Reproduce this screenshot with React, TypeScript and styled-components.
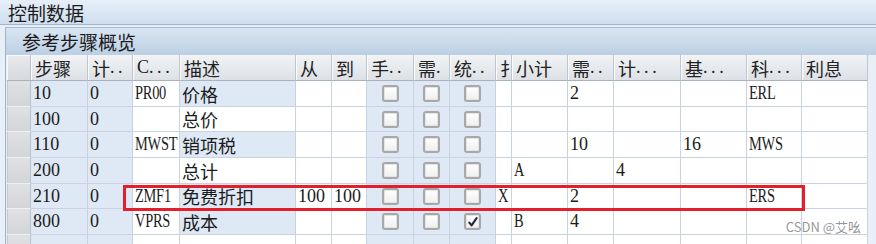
import React from "react";
import styled, { createGlobalStyle } from "styled-components";

const GlobalStyle = createGlobalStyle`
  html, body {
    margin: 0;
    padding: 0;
    overflow: hidden;
    background: #e8eff7;
  }
  body {
    font-family: "Liberation Serif", "Noto Sans CJK SC", serif;
    color: #1b1b1b;
  }
`;

type Bg = "blue" | "white";

type Column = {
  name: string;
  dots: number;
  width: number;
  bg: Bg | "desc";
  check?: boolean;
};

const columns: Column[] = [
  { name: "步骤", dots: 0, width: 57, bg: "blue" },
  { name: "计", dots: 2, width: 45, bg: "blue" },
  { name: "C", dots: 3, width: 47, bg: "white" },
  { name: "描述", dots: 0, width: 116, bg: "desc" },
  { name: "从", dots: 0, width: 36, bg: "white" },
  { name: "到", dots: 0, width: 35, bg: "white" },
  { name: "手", dots: 2, width: 47, bg: "blue", check: true },
  { name: "需", dots: 1, width: 36, bg: "blue", check: true },
  { name: "统", dots: 2, width: 46, bg: "blue", check: true },
  { name: "扌", dots: 0, width: 16, bg: "white" },
  { name: "小计", dots: 0, width: 56, bg: "white" },
  { name: "需", dots: 2, width: 46, bg: "white" },
  { name: "计", dots: 3, width: 67, bg: "white" },
  { name: "基", dots: 3, width: 66, bg: "white" },
  { name: "科", dots: 3, width: 55, bg: "white" },
  { name: "利息", dots: 0, width: 66, bg: "white" },
];

// one entry per column; checkbox columns hold true/false
type Value = string | boolean;

const rows: { height: number; values: Value[] }[] = [
  { height: 26, values: ["10", "0", "PR00", "价格", "", "", false, false, false, "", "", "2", "", "", "ERL", ""] },
  { height: 25, values: ["100", "0", "", "总价", "", "", false, false, false, "", "", "", "", "", "", ""] },
  { height: 26, values: ["110", "0", "MWST", "销项税", "", "", false, false, false, "", "", "10", "", "16", "MWS", ""] },
  { height: 26, values: ["200", "0", "", "总计", "", "", false, false, false, "", "A", "", "4", "", "", ""] },
  { height: 25, values: ["210", "0", "ZMF1", "免费折扣", "100", "100", false, false, false, "X", "", "2", "", "", "ERS", ""] },
  { height: 26, values: ["800", "0", "VPRS", "成本", "", "", false, false, true, "", "B", "4", "", "", "", ""] },
  { height: 26, values: ["", "", "", "", "", "", "", "", "", "", "", "", "", "", "", ""] },
];

const template = `24px ${columns.map((c) => `${c.width}px`).join(" ")}`;

const isCode = (s: string) => /[A-Z]/.test(s);

export default function App() {
  return (
    <Page>
      <GlobalStyle />
      <TitleBar>控制数据</TitleBar>
      <Panel>
        <PanelTitle>参考步骤概览</PanelTitle>
        <Grid>
          <Row $height={26}>
            <HeadSelector />
            {columns.map((c, i) => (
              <HeadCell key={i}>
                {c.name}
                {c.dots > 0 && <Dots>{".".repeat(c.dots)}</Dots>}
              </HeadCell>
            ))}
          </Row>
          {rows.map((r, ri) => (
            <Row key={ri} $height={r.height}>
              <Selector />
              {columns.map((c, ci) => {
                const v = r.values[ci];
                const bg: Bg =
                  c.bg === "desc" ? (r.values[2] ? "blue" : "white") : c.bg;
                if (c.check) {
                  return (
                    <Cell key={ci} $bg={bg} $center>
                      {typeof v === "boolean" && (
                        <CheckBox>
                          {v && (
                            <svg width="12" height="12" viewBox="0 0 12 12">
                              <path
                                d="M2.3 6.6 L4.6 9.4 L9.6 2.2"
                                fill="none"
                                stroke="#1f2440"
                                strokeWidth="2.1"
                                strokeLinecap="round"
                                strokeLinejoin="round"
                              />
                            </svg>
                          )}
                        </CheckBox>
                      )}
                    </Cell>
                  );
                }
                const text = v as string;
                return (
                  <Cell key={ci} $bg={bg}>
                    {isCode(text) ? <Code>{text}</Code> : text}
                  </Cell>
                );
              })}
            </Row>
          ))}
          <Highlight />
        </Grid>
      </Panel>
      <Watermark>CSDN @艾吆</Watermark>
    </Page>
  );
}

const Page = styled.div`
  position: relative;
  width: 876px;
  height: 244px;
  overflow: hidden;
`;

const TitleBar = styled.div`
  height: 25px;
  box-sizing: border-box;
  padding-left: 8px;
  display: flex;
  align-items: center;
  font-family: "Noto Sans CJK SC", sans-serif;
  font-size: 19px;
  color: #1c1c1c;
  background: linear-gradient(#e6eff8, #cfdeee);
  border-bottom: 1px solid #9fb5cc;
`;

const Panel = styled.div`
  margin-top: 2px;
  margin-left: 5px;
  border-left: 1px solid #9fb3c8;
  padding-left: 1px;
`;

const PanelTitle = styled.div`
  height: 28px;
  box-sizing: border-box;
  margin-left: -1px;
  padding-left: 16px;
  display: flex;
  align-items: center;
  font-family: "Noto Sans CJK SC", sans-serif;
  font-size: 19px;
  color: #1c1c1c;
  background: linear-gradient(#d9e6f3, #bccfe3);
  border-top: 1px solid #a7bcd2;
`;

const Grid = styled.div`
  position: relative;
  display: flex;
  flex-direction: column;
`;

const Row = styled.div<{ $height: number }>`
  display: grid;
  grid-template-columns: ${template};
  height: ${(p) => p.$height}px;
`;

const HeadSelector = styled.div`
  box-sizing: border-box;
  background: linear-gradient(#e8eaed, #d6d9dd);
  border-right: 1px solid #b8bfc8;
  border-bottom: 1px solid #a9b2bd;
  box-shadow: inset 1px 1px 0 #f7f8f9;
`;

const HeadCell = styled.div`
  box-sizing: border-box;
  display: flex;
  align-items: center;
  padding-left: 4px;
  font-size: 18px;
  white-space: nowrap;
  overflow: hidden;
  color: #222;
  background: linear-gradient(#f1f3f5, #dde1e6);
  border-right: 1px solid #bcc5d0;
  border-bottom: 1px solid #a9b3bf;
  box-shadow: inset 1px 0 0 #fbfcfd;
`;

const Dots = styled.span`
  letter-spacing: 3.6px;
`;

const Selector = styled.div`
  box-sizing: border-box;
  background: linear-gradient(#dfe1e4, #d2d5d9);
  border-right: 1px solid #b9c0c8;
  border-bottom: 1px solid #eef0f2;
  box-shadow: inset 1px 0 0 #c4c9cf;
`;

const Cell = styled.div<{ $bg: Bg; $center?: boolean }>`
  box-sizing: border-box;
  display: flex;
  align-items: center;
  justify-content: ${(p) => (p.$center ? "center" : "flex-start")};
  padding-left: ${(p) => (p.$center ? 0 : 2)}px;
  font-size: 18px;
  white-space: nowrap;
  overflow: hidden;
  background: ${(p) => (p.$bg === "blue" ? "#dfe9f5" : "#ffffff")};
  border-right: 1px solid #c8d3df;
  border-bottom: 1px solid #c8d3df;
`;

/* the codes are set in a narrow, half-width serif in the original */
const Code = styled.span`
  display: inline-block;
  transform: scaleX(0.8);
  transform-origin: left center;
  letter-spacing: -0.3px;
`;

const CheckBox = styled.span`
  width: 17px;
  height: 17px;
  box-sizing: border-box;
  display: flex;
  align-items: center;
  justify-content: center;
  border: 2px solid #a8a8a8;
  border-radius: 3px;
  background: linear-gradient(#ffffff, #efefef);
  box-shadow: inset 0 0 0 1px #e4e4e4;
`;

const Highlight = styled.div`
  position: absolute;
  left: 116px;
  top: 130px;
  width: 682px;
  height: 26px;
  box-sizing: border-box;
  border: 3px solid #e41e2a;
  pointer-events: none;
`;

const Watermark = styled.div`
  position: absolute;
  right: 15px;
  bottom: 8px;
  font-family: "Noto Sans CJK SC", sans-serif;
  font-size: 13px;
  color: rgba(130, 130, 130, 0.85);
`;
